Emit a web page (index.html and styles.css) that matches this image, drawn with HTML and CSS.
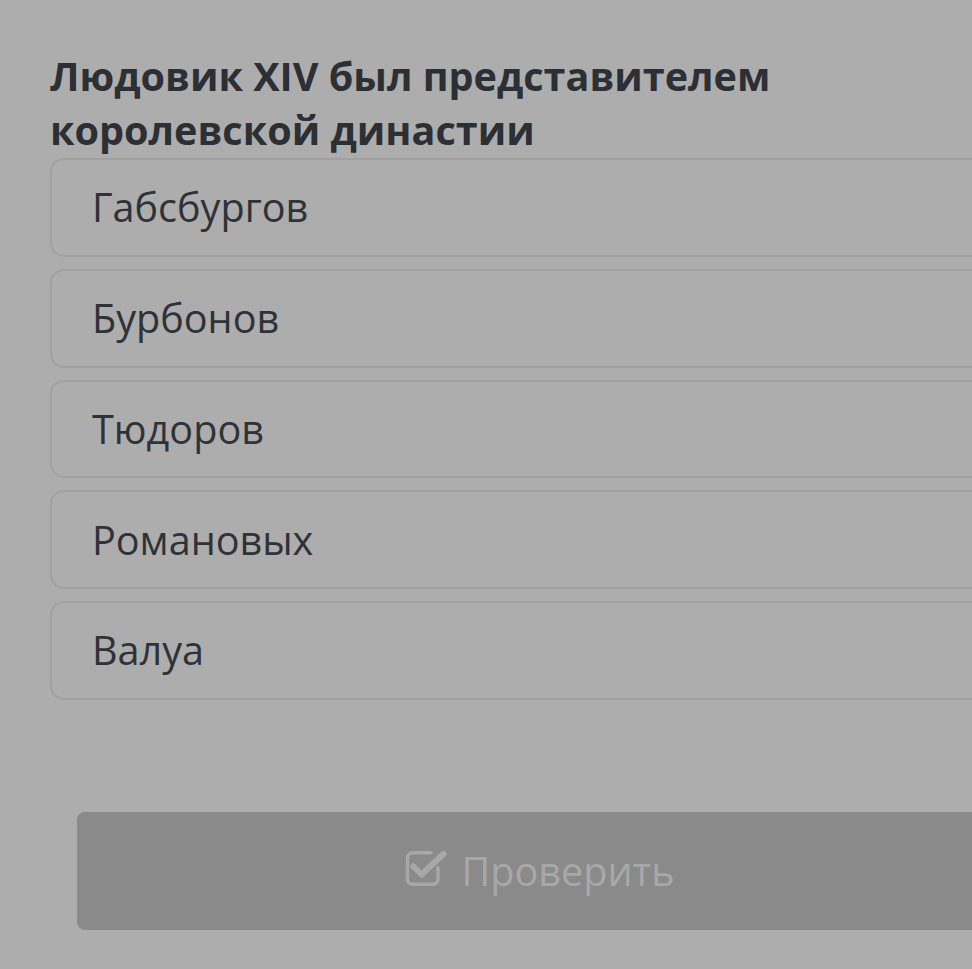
FILE: index.html
```html
<!DOCTYPE html>
<html lang="ru">
<head>
<meta charset="utf-8">
<link rel="stylesheet" href="styles.css">
</head>
<body>
<div class="page">
  <h1 class="question">Людовик XIV был представителем королевской династии</h1>
  <div class="options">
    <div class="option">Габсбургов</div>
    <div class="option">Бурбонов</div>
    <div class="option">Тюдоров</div>
    <div class="option">Романовых</div>
    <div class="option">Валуа</div>
  </div>
  <div class="actions">
    <button class="check-btn">
      <svg class="check-icon" viewBox="0 0 42 37" width="42" height="37" aria-hidden="true">
        <path d="M26 2.8H7.5a5 5 0 0 0-5 5v21.5a5 5 0 0 0 5 5h20.5a5 5 0 0 0 5-5v-11.5" fill="none" stroke="currentColor" stroke-width="3.4" stroke-linecap="round"/>
        <path d="M8.5 16.5l8 8L38.5 4" fill="none" stroke="currentColor" stroke-width="6" stroke-linecap="round" stroke-linejoin="round"/>
      </svg>
      <span>Проверить</span>
    </button>
  </div>
</div>
</body>
</html>
```

FILE: styles.css
```css
html, body {
  margin: 0;
  padding: 0;
  background: #adadad;
  overflow: hidden;
}

body {
  width: 972px;
  height: 969px;
  font-family: "Open Sans", "Noto Sans", sans-serif;
}

.page {
  width: 1080px;
  box-sizing: border-box;
  padding: 49px 50px 0 50px;
}

.question {
  margin: 0 0 1px 0;
  font-size: 39.6px;
  line-height: 54px;
  font-weight: 700;
  color: #2c2f34;
  width: 800px;
}

.options {
  display: flex;
  flex-direction: column;
  gap: 12px;
}

.option {
  height: 94.75px;
  border: 2px solid #a1a1a1;
  border-radius: 14px;
  display: flex;
  align-items: center;
  padding-left: 40px;
  font-size: 39.6px;
  color: #2f3237;
}

.actions {
  padding: 112px 27px 0 27px;
}

.check-btn {
  width: 100%;
  height: 118px;
  border: none;
  border-radius: 8px;
  background: #8a8a8a;
  color: #a8a8a8;
  font-family: "Open Sans", "Noto Sans", sans-serif;
  font-size: 39.6px;
  display: flex;
  align-items: center;
  justify-content: center;
  gap: 14px;
  padding: 0;
}

.check-icon {
  display: block;
  margin-top: -4px;
}
```
